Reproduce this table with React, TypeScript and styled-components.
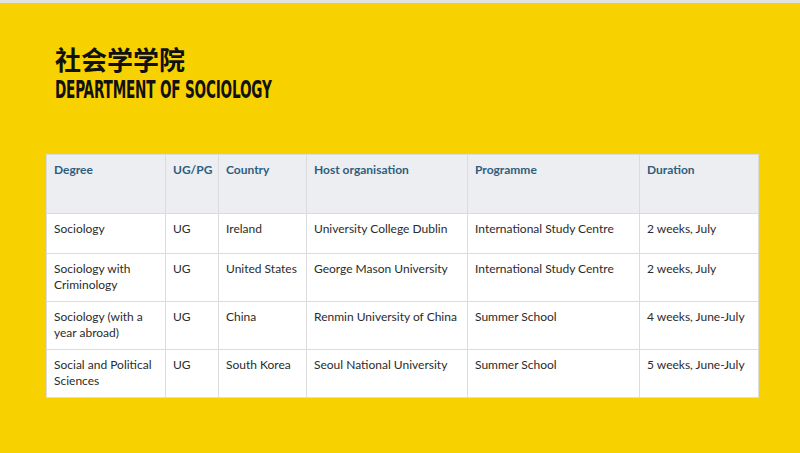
import React from 'react';
import styled, { createGlobalStyle } from 'styled-components';

interface Exchange {
  degree: string;
  level: string;
  country: string;
  host: string;
  programme: string;
  duration: string;
}

const exchanges: Exchange[] = [
  {
    degree: 'Sociology',
    level: 'UG',
    country: 'Ireland',
    host: 'University College Dublin',
    programme: 'International Study Centre',
    duration: '2 weeks, July',
  },
  {
    degree: 'Sociology with Criminology',
    level: 'UG',
    country: 'United States',
    host: 'George Mason University',
    programme: 'International Study Centre',
    duration: '2 weeks, July',
  },
  {
    degree: 'Sociology (with a year abroad)',
    level: 'UG',
    country: 'China',
    host: 'Renmin University of China',
    programme: 'Summer School',
    duration: '4 weeks, June-July',
  },
  {
    degree: 'Social and Political Sciences',
    level: 'UG',
    country: 'South Korea',
    host: 'Seoul National University',
    programme: 'Summer School',
    duration: '5 weeks, June-July',
  },
];

const columns = [
  { label: 'Degree', width: 119 },
  { label: 'UG/PG', width: 53 },
  { label: 'Country', width: 88 },
  { label: 'Host organisation', width: 161 },
  { label: 'Programme', width: 172 },
  { label: 'Duration', width: 119 },
];

const GlobalStyle = createGlobalStyle`
  html, body {
    margin: 0;
    padding: 0;
    background: #f8d100;
  }
`;

const Slide = styled.div`
  width: 800px;
  height: 453px;
  box-sizing: border-box;
  background: #f8d100;
  border-top: 3px solid #e2e2e0;
  padding: 40px 0 0 46px;
  display: flex;
  flex-direction: column;
`;

const TitleBlock = styled.div`
  padding-left: 9px;
  display: flex;
  flex-direction: column;
  align-items: flex-start;
`;

const ChineseTitle = styled.h1`
  margin: 0;
  font-family: 'Noto Sans CJK SC', sans-serif;
  font-weight: 700;
  font-size: 26px;
  line-height: 32px;
  color: #111;
`;

/* condensed display face approximated by squeezing a bold sans */
const EnglishTitle = styled.h2`
  margin: 2px 0 0;
  font-family: 'DejaVu Sans Condensed', 'DejaVu Sans', sans-serif;
  font-weight: 700;
  font-size: 24px;
  line-height: 26px;
  letter-spacing: -0.3px;
  color: #111;
  display: inline-block;
  transform: scale(0.63, 1);
  transform-origin: left center;
  white-space: nowrap;
`;

const Table = styled.table`
  margin-top: 51px;
  width: 712px;
  border-collapse: collapse;
  table-layout: fixed;
  background: #ffffff;
  font-family: Lato, 'Open Sans', sans-serif;
  font-size: 12px;
  line-height: 16px;
  color: #2b2b2b;
`;

const HeadCell = styled.th<{ $width: number }>`
  width: ${(p) => p.$width}px;
  height: 59px;
  box-sizing: border-box;
  padding: 7px 7px 0;
  text-align: left;
  vertical-align: top;
  font-weight: 700;
  color: #2f5e7d;
  background: #edeef2;
  border: 1px solid #dcdcdc;
`;

const Row = styled.tr<{ $height: number }>`
  height: ${(p) => p.$height}px;
`;

const Cell = styled.td`
  box-sizing: border-box;
  padding: 7px 7px 0;
  vertical-align: top;
  border: 1px solid #dcdcdc;
`;

export default function App() {
  return (
    <>
      <GlobalStyle />
      <Slide>
        <TitleBlock>
          <ChineseTitle>社会学学院</ChineseTitle>
          <EnglishTitle>DEPARTMENT OF SOCIOLOGY</EnglishTitle>
        </TitleBlock>
        <Table>
          <thead>
            <tr>
              {columns.map((c) => (
                <HeadCell key={c.label} $width={c.width}>
                  {c.label}
                </HeadCell>
              ))}
            </tr>
          </thead>
          <tbody>
            {exchanges.map((e, i) => (
              <Row key={e.degree} $height={i === 0 ? 40 : 48}>
                <Cell>{e.degree}</Cell>
                <Cell>{e.level}</Cell>
                <Cell>{e.country}</Cell>
                <Cell>{e.host}</Cell>
                <Cell>{e.programme}</Cell>
                <Cell>{e.duration}</Cell>
              </Row>
            ))}
          </tbody>
        </Table>
      </Slide>
    </>
  );
}
